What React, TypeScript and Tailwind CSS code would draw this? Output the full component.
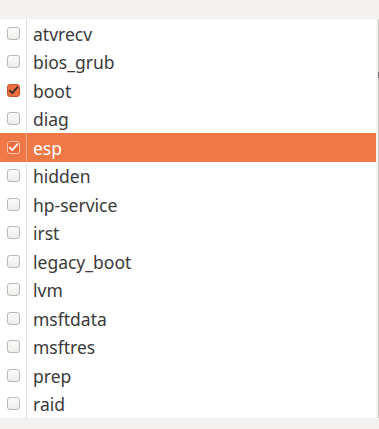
import React from "react";

const items = [
  { name: "atvrecv", checked: false },
  { name: "bios_grub", checked: false },
  { name: "boot", checked: true },
  { name: "diag", checked: false },
  { name: "esp", checked: true, selected: true },
  { name: "hidden", checked: false },
  { name: "hp-service", checked: false },
  { name: "irst", checked: false },
  { name: "legacy_boot", checked: false },
  { name: "lvm", checked: false },
  { name: "msftdata", checked: false },
  { name: "msftres", checked: false },
  { name: "prep", checked: false },
  { name: "raid", checked: false },
];

function Check({ checked, selected }: { checked: boolean; selected?: boolean }) {
  if (!checked) {
    return <div className="w-[13px] h-[13px] rounded-[3px] border border-[#b8b8b6] bg-gradient-to-b from-[#fbfbfb] to-[#ededeb]" />;
  }
  return (
    <div
      className={
        selected
          ? "w-[13px] h-[13px] rounded-[3px] border border-[#f6c2aa] bg-[#e9693a] flex items-center justify-center"
          : "w-[13px] h-[13px] rounded-[3px] border border-[#c4552b] bg-[#ee6f3f] flex items-center justify-center"
      }
    >
      <svg width="11" height="11" viewBox="0 0 11 11">
        <path
          d="M1.8 5.6 L4.3 8.2 L9.4 2.2"
          fill="none"
          stroke={selected ? "#ffffff" : "#3a2a25"}
          strokeWidth="1.8"
          strokeLinecap="round"
          strokeLinejoin="round"
        />
      </svg>
    </div>
  );
}

export default function App() {
  return (
    <div className="w-[379px] h-[429px] bg-[#f2f1f0] flex flex-col" style={{ fontFamily: '"Noto Sans", "DejaVu Sans", sans-serif' }}>
      <div className="h-[19px]" />
      <div className="flex">
        <div className="w-[376px] bg-white">
          {items.map((it) => (
            <div
              key={it.name}
              className={
                it.selected
                  ? "h-[28.5px] flex items-center bg-[#f07746]"
                  : "h-[28.5px] flex items-center"
              }
            >
              <div className="w-[26px] h-full flex items-center justify-center pl-[1px]">
                <Check checked={it.checked} selected={it.selected} />
              </div>
              <div className={it.selected ? "w-px h-full bg-[#e7a88c]" : "w-px h-full bg-[#e2e2e0]"} />
              <span className={it.selected ? "pl-[6px] pt-[2px] text-[17.5px] leading-none text-white" : "pl-[6px] pt-[2px] text-[17.5px] leading-none text-[#3a3a3a]"}>
                {it.name}
              </span>
            </div>
          ))}
        </div>
        <div className="w-[3px] flex">
          <div className="w-[2px] bg-[#f4f4f3]" />
          <div className="w-px bg-[#c8c8c6] flex flex-col">
            <div className="h-[53px]" />
            <div className="h-[6px] bg-[#6f6f6f]" />
          </div>
        </div>
      </div>
      <div className="flex-1" />
    </div>
  );
}
